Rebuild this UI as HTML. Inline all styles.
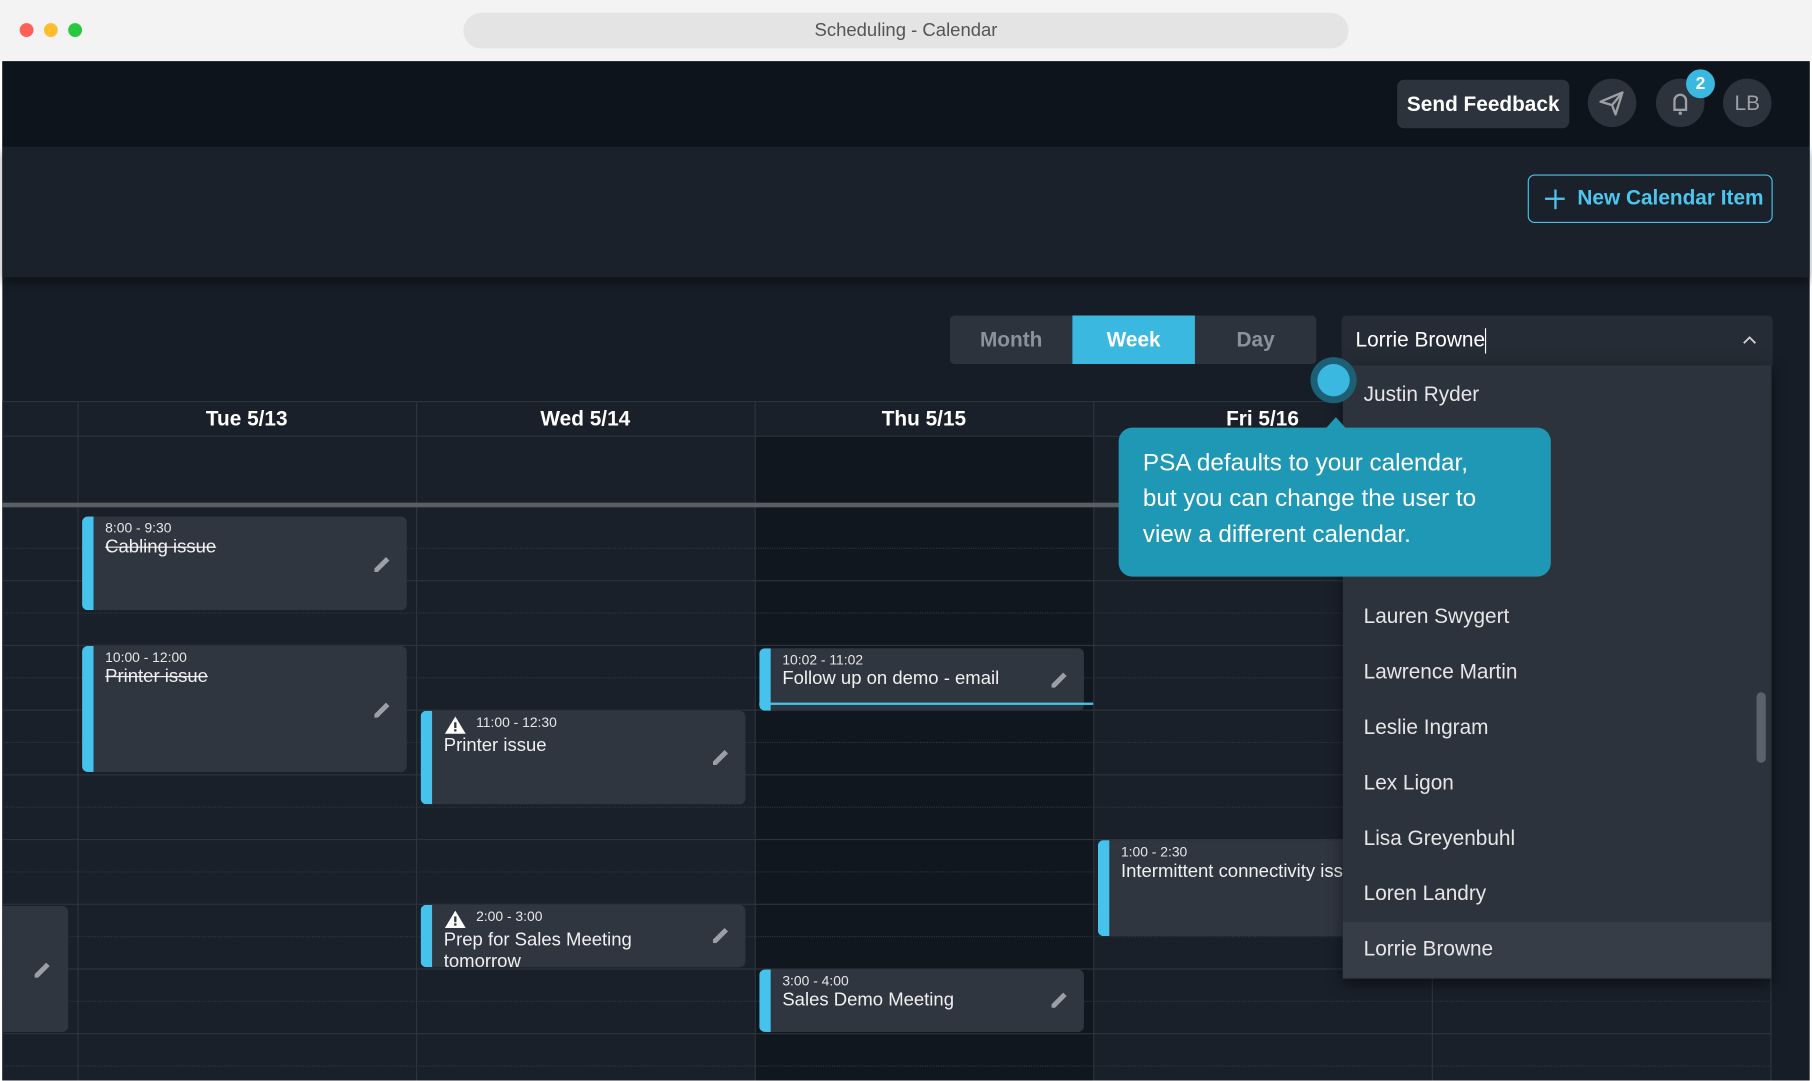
<!DOCTYPE html>
<html><head><meta charset="utf-8"><style>
*{margin:0;padding:0;box-sizing:border-box}
html,body{width:1812px;height:1080px;overflow:hidden;background:#fff;font-family:"Liberation Sans",sans-serif}
#s{position:absolute;left:0;top:0;width:1568px;height:935px;transform:scale(1.15561);transform-origin:0 0;background:#fff}
.a{position:absolute}
.circ{position:absolute;width:42px;height:42px;border-radius:50%;background:#2c333c}
.hd{position:absolute;top:348px;height:29px;width:293px;text-align:center;color:#fff;font-weight:bold;font-size:18px;line-height:29px}
.vl{position:absolute;top:348px;bottom:0;width:1px;background:#2c343d}
.hl{position:absolute;left:2px;width:1531px;height:1px;background:#2c343d}
.dl{position:absolute;left:2px;width:1531px;height:0;border-top:1px dotted #2e3640}
.ev{position:absolute;background:#2f3640;border-radius:5px;border-left:10px solid #45c3ec;color:#fff;overflow:hidden}
.ev .t{position:absolute;left:10px;top:3px;font-size:12px;color:#e6e6e6}
.ev .n{position:absolute;left:10px;top:19px;font-size:16px;line-height:19px;color:#f0f0f0}
.ev .p{position:absolute;right:12px}
.li{position:absolute;left:1180px;font-size:18px;color:#e6e6e6}
</style></head><body><div id="s">
<div class="a" style="left:0;top:0;width:1568px;height:53px;background:#f3f3f3"></div>
<div class="a" style="left:17px;top:20px;width:12px;height:12px;border-radius:50%;background:#fe5f57"></div>
<div class="a" style="left:38px;top:20px;width:12px;height:12px;border-radius:50%;background:#febc2e"></div>
<div class="a" style="left:59px;top:20px;width:12px;height:12px;border-radius:50%;background:#28c840"></div>
<div class="a" style="left:401px;top:11px;width:766px;height:31px;border-radius:16px;background:#e4e4e4;text-align:center;line-height:31px;font-size:16px;color:#555">Scheduling - Calendar</div>
<div class="a" style="left:2px;top:53px;width:1564px;height:882px;background:#161d26;overflow:hidden"></div>
<div class="a" style="left:2px;top:53px;width:1564px;height:74px;background:#0d141c"></div>
<div class="a" style="left:1209px;top:69px;width:149px;height:42px;border-radius:6px;background:#2c333c;color:#fff;font-weight:bold;font-size:18px;line-height:42px;text-align:center">Send Feedback</div>
<div class="circ" style="left:1374px;top:68px"><svg width="42" height="42" viewBox="0 0 42 42"><path d="M11 20 L30 12 L24 31 L21 23 Z M21 23 L30 12" fill="none" stroke="#9aa0a6" stroke-width="2" stroke-linejoin="round"/></svg></div>
<div class="circ" style="left:1433px;top:68px"><svg width="42" height="42" viewBox="0 0 42 42"><path d="M15 27 H27 M16 27 V19 a5 5 0 0 1 10 0 V27" fill="none" stroke="#9aa0a6" stroke-width="2"/><circle cx="21" cy="30" r="1.5" fill="#9aa0a6"/></svg></div>
<div class="a" style="left:1459px;top:60px;width:25px;height:25px;border-radius:50%;background:#3ab8e0;color:#fff;font-size:15px;font-weight:bold;text-align:center;line-height:25px">2</div>
<div class="circ" style="left:1491px;top:68px;color:#9aa0a6;font-size:18px;text-align:center;line-height:42px">LB</div>
<div class="a" style="left:2px;top:127px;width:1564px;height:113px;background:#1a212a;box-shadow:0 4px 8px rgba(0,0,0,.4)"></div>
<div class="a" style="left:1322px;top:151px;width:212px;height:42px;border:1.5px solid #47c3ea;border-radius:6px;color:#4cc6ee;font-weight:bold;font-size:18px;line-height:39px;padding-left:42px">New Calendar Item</div>
<div class="a" style="left:1337px;top:171px;width:17px;height:2px;background:#4cc6ee"></div>
<div class="a" style="left:1344.5px;top:164px;width:2px;height:17px;background:#4cc6ee"></div>
<div class="a" style="left:822px;top:273px;width:317px;height:42px;border-radius:4px;background:#2c333c;overflow:hidden;font-size:18px;font-weight:bold;line-height:42px;text-align:center">
<div class="a" style="left:0;width:106px;color:#8a939c">Month</div>
<div class="a" style="left:106px;width:106px;background:#3ab8e0;color:#fff">Week</div>
<div class="a" style="left:212px;width:105px;color:#8a939c">Day</div></div>
<div class="a" style="left:1161px;top:273px;width:373px;height:43px;background:#252c35;border-radius:4px 4px 0 0;color:#fff;font-size:18px;line-height:43px;padding-left:12px">Lorrie Browne<span style="display:inline-block;width:1px;height:22px;background:#fff;vertical-align:middle"></span></div>
<svg class="a" style="left:1507px;top:288px" width="14" height="12"><path d="M2 9 L7 4 L12 9" fill="none" stroke="#ccc" stroke-width="1.6"/></svg>
<div class="a" style="left:653px;top:377px;width:293px;height:558px;background:#10171f"></div>
<div class="a" style="left:2px;top:377px;width:651px;height:558px;background:#19202a"></div>
<div class="a" style="left:946px;top:377px;width:587px;height:558px;background:#19202a"></div>
<div class="a" style="left:2px;top:348px;width:1531px;height:29px;background:#19202a"></div>
<div class="hl" style="top:347px"></div><div class="hl" style="top:377px"></div>
<div class="hl" style="top:502px"></div><div class="hl" style="top:558px"></div><div class="hl" style="top:614px"></div><div class="hl" style="top:670px"></div><div class="hl" style="top:726px"></div><div class="hl" style="top:782px"></div><div class="hl" style="top:838px"></div><div class="hl" style="top:894px"></div>
<div class="dl" style="top:474px"></div><div class="dl" style="top:530px"></div><div class="dl" style="top:586px"></div><div class="dl" style="top:642px"></div><div class="dl" style="top:698px"></div><div class="dl" style="top:754px"></div><div class="dl" style="top:810px"></div><div class="dl" style="top:866px"></div><div class="dl" style="top:922px"></div>
<div class="vl" style="left:67px"></div><div class="vl" style="left:360px"></div><div class="vl" style="left:653px"></div><div class="vl" style="left:946px"></div><div class="vl" style="left:1239px"></div><div class="vl" style="left:1532px"></div>
<div class="hd" style="left:67px">Tue 5/13</div><div class="hd" style="left:360px">Wed 5/14</div><div class="hd" style="left:653px">Thu 5/15</div><div class="hd" style="left:946px">Fri 5/16</div>
<div class="a" style="left:2px;top:435px;width:966px;height:4px;background:#5a5f66"></div>
<div class="ev" style="left:71px;top:447px;width:281px;height:81px"><div class="t">8:00 - 9:30</div><div class="n" style="text-decoration:line-through;top:17px">Cabling issue</div><svg class="p" style="top:32px" width="18" height="18" viewBox="0 0 18 18"><path d="M2 16 L2 13 L12 3 L15 6 L5 16 Z" fill="#9aa0a6"/></svg></div>
<div class="ev" style="left:71px;top:559px;width:281px;height:109px"><div class="t">10:00 - 12:00</div><div class="n" style="text-decoration:line-through;top:17px">Printer issue</div><svg class="p" style="top:46px" width="18" height="18" viewBox="0 0 18 18"><path d="M2 16 L2 13 L12 3 L15 6 L5 16 Z" fill="#9aa0a6"/></svg></div>
<div class="ev" style="left:364px;top:615px;width:281px;height:81px"><svg class="a" style="left:10px;top:4px" width="20" height="17"><path d="M10 1 L19 16 L1 16 Z" fill="#fff"/><rect x="9" y="6" width="2" height="5" fill="#2f3640"/><rect x="9" y="12" width="2" height="2" fill="#2f3640"/></svg><div class="t" style="left:38px">11:00 - 12:30</div><div class="n" style="top:21px">Printer issue</div><svg class="p" style="top:31px" width="18" height="18" viewBox="0 0 18 18"><path d="M2 16 L2 13 L12 3 L15 6 L5 16 Z" fill="#9aa0a6"/></svg></div>
<div class="ev" style="left:364px;top:783px;width:281px;height:54px"><svg class="a" style="left:10px;top:4px" width="20" height="17"><path d="M10 1 L19 16 L1 16 Z" fill="#fff"/><rect x="9" y="6" width="2" height="5" fill="#2f3640"/><rect x="9" y="12" width="2" height="2" fill="#2f3640"/></svg><div class="t" style="left:38px">2:00 - 3:00</div><div class="n" style="top:21px">Prep for Sales Meeting<br>tomorrow</div><svg class="p" style="top:17px" width="18" height="18" viewBox="0 0 18 18"><path d="M2 16 L2 13 L12 3 L15 6 L5 16 Z" fill="#9aa0a6"/></svg></div>
<div class="ev" style="left:657px;top:561px;width:281px;height:54px"><div class="t">10:02 - 11:02</div><div class="n" style="top:17px">Follow up on demo - email</div><svg class="p" style="top:18px" width="18" height="18" viewBox="0 0 18 18"><path d="M2 16 L2 13 L12 3 L15 6 L5 16 Z" fill="#9aa0a6"/></svg></div>
<div class="a" style="left:657px;top:608px;width:289px;height:2px;background:#45c3ec"></div>
<div class="ev" style="left:657px;top:839px;width:281px;height:54px"><div class="t">3:00 - 4:00</div><div class="n" style="top:17px">Sales Demo Meeting</div><svg class="p" style="top:17px" width="18" height="18" viewBox="0 0 18 18"><path d="M2 16 L2 13 L12 3 L15 6 L5 16 Z" fill="#9aa0a6"/></svg></div>
<div class="ev" style="left:950px;top:727px;width:230px;height:83px"><div class="t">1:00 - 2:30</div><div class="n" style="top:18px;white-space:nowrap">Intermittent connectivity issue</div></div>
<div class="a" style="left:2px;top:784px;width:57px;height:109px;background:#2f3640;border-radius:0 5px 5px 0"><svg class="a" style="left:26px;top:46px" width="18" height="18" viewBox="0 0 18 18"><path d="M2 16 L2 13 L12 3 L15 6 L5 16 Z" fill="#9aa0a6"/></svg></div>
<div class="a" style="left:1162px;top:316px;width:371px;height:531px;background:#2c333c;box-shadow:0 4px 12px rgba(0,0,0,.5)"></div>
<div class="a" style="left:1162px;top:798px;width:371px;height:48px;background:#363d47"></div>
<div class="li" style="top:331px">Justin Ryder</div>
<div class="li" style="top:523px">Lauren Swygert</div>
<div class="li" style="top:571px">Lawrence Martin</div>
<div class="li" style="top:619px">Leslie Ingram</div>
<div class="li" style="top:667px">Lex Ligon</div>
<div class="li" style="top:715px">Lisa Greyenbuhl</div>
<div class="li" style="top:763px">Loren Landry</div>
<div class="li" style="top:811px">Lorrie Browne</div>
<div class="a" style="left:1520px;top:599px;width:8px;height:61px;border-radius:4px;background:#5a626b"></div>
<div class="a" style="left:1134px;top:309px;width:40px;height:40px;border-radius:50%;background:#1d5f75"></div>
<div class="a" style="left:1140px;top:315px;width:28px;height:28px;border-radius:50%;background:#3ab8e0"></div>
<div class="a" style="left:1147px;top:361px;width:0;height:0;border-left:9px solid transparent;border-right:9px solid transparent;border-bottom:10px solid #1f98b6"></div>
<div class="a" style="left:968px;top:370px;width:374px;height:129px;border-radius:12px;background:#1f98b6;color:#fff;font-size:21px;line-height:31px;padding:15px 21px;white-space:nowrap">PSA defaults to your calendar,<br>but you can change the user to<br>view a different calendar.</div>
</div></body></html>
